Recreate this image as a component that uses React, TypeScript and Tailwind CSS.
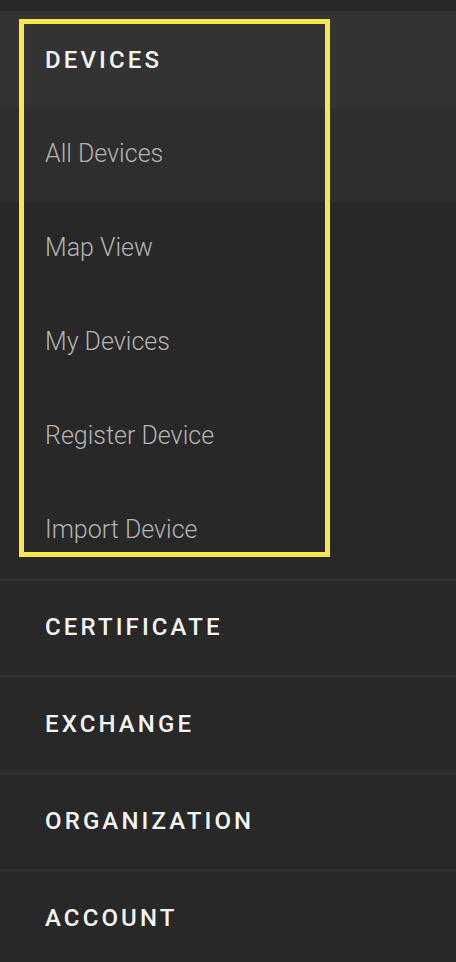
import React from 'react'

const subItems = ['All Devices', 'Map View', 'My Devices', 'Register Device', 'Import Device']
const sections = ['CERTIFICATE', 'EXCHANGE', 'ORGANIZATION', 'ACCOUNT']

const font = { fontFamily: 'Roboto, "Noto Sans", sans-serif' }

function Separator() {
  return <div className="h-[3px] w-full bg-[#303030]" />
}

export default function App() {
  return (
    <div className="relative min-h-screen w-full overflow-hidden bg-[#282828]" style={font}>
      <div className="h-[11px] bg-[#282828]" />
      <Separator />
      <div className="flex h-[94px] items-center bg-[#333333] px-[45px] pb-[3px]">
        <span className="text-[24px] font-medium tracking-[0.13em] text-[#f5f5f5]">DEVICES</span>
      </div>
      {subItems.map((item, i) => (
        <div
          key={item}
          className={`flex h-[94px] items-center px-[45px] pb-[3px] ${i === 0 ? 'bg-[#2e2e2e]' : 'bg-[#282828]'}`}
        >
          <span className="text-[25px] font-light text-[#b4b4b4]">{item}</span>
        </div>
      ))}
      {sections.map((s) => (
        <div key={s}>
          <Separator />
          <div className="flex h-[94px] items-center px-[45px] pb-[3px]">
            <span className="text-[24px] font-medium tracking-[0.13em] text-[#f5f5f5]">{s}</span>
          </div>
        </div>
      ))}

      {/* highlight box */}
      <div className="pointer-events-none absolute left-[19px] top-[19px] h-[538px] w-[311px] border-[5px] border-[#f4e84c]" />
    </div>
  )
}
